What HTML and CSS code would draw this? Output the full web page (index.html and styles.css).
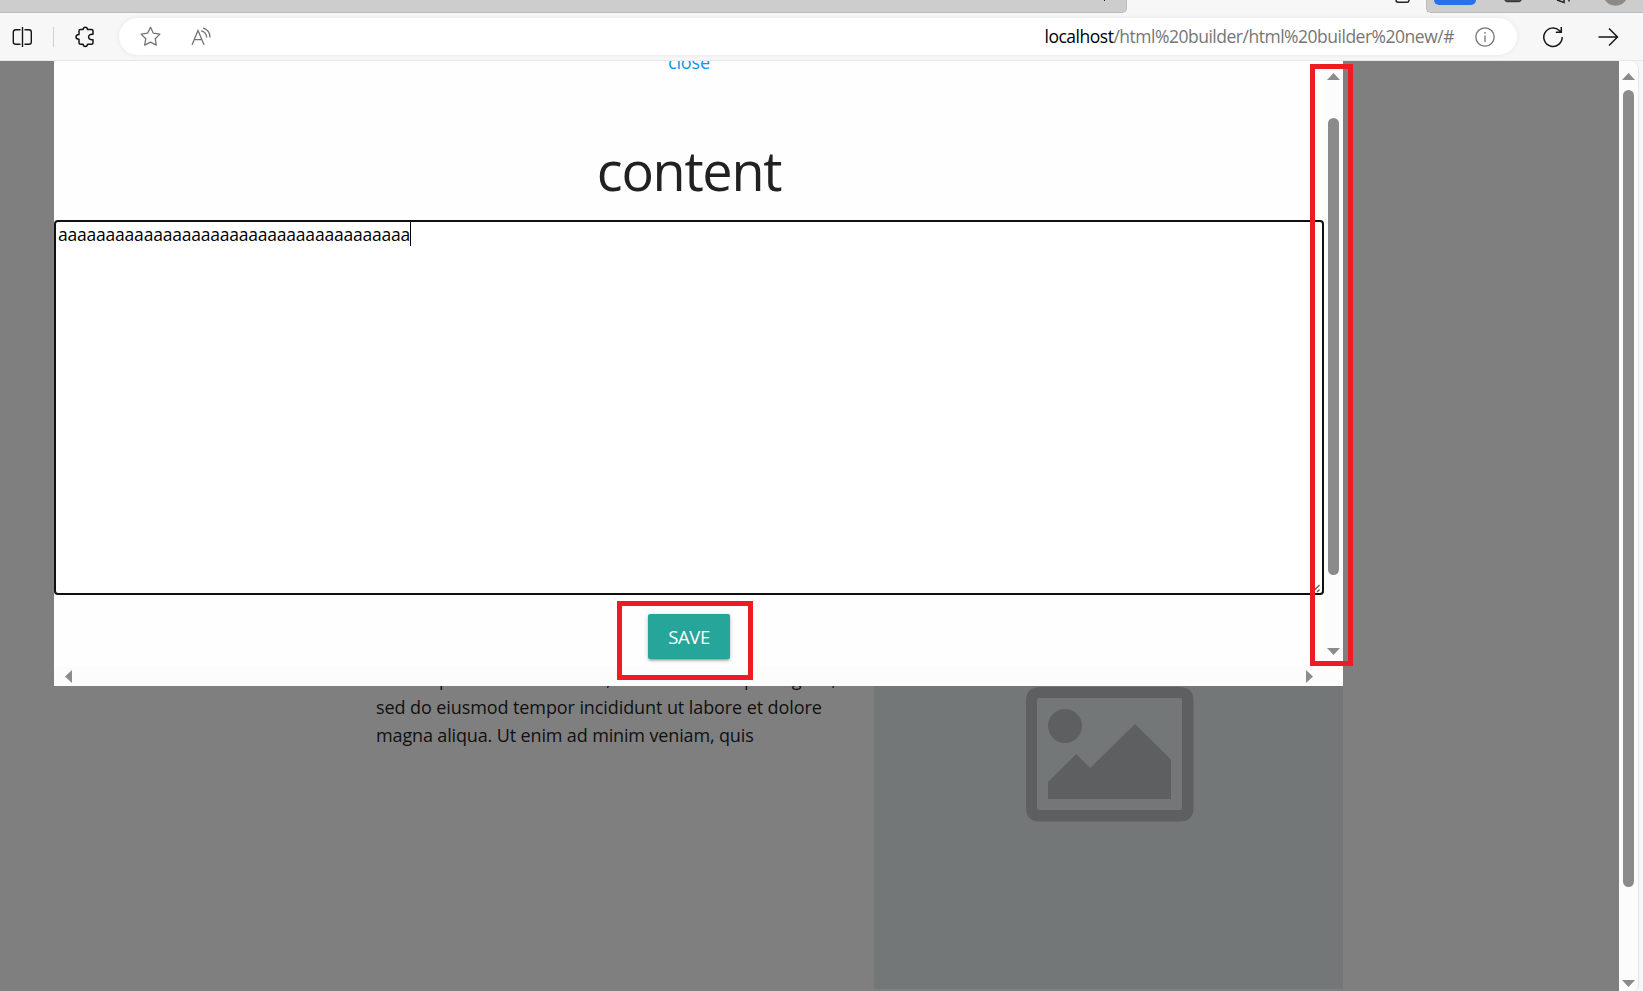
FILE: index.html
```html
<!DOCTYPE html>
<html lang="en">
<head>
<meta charset="utf-8">
<title>html builder</title>
<link rel="stylesheet" href="styles.css">
</head>
<body>
<header class="chrome">
  <div class="tabstrip">
    <div class="tabs-left"><svg class="tab-mark" width="6" height="3"><path d="M2 0h2v1h-1V0z" fill="#111"/></svg></div>
    <svg class="tab-icon" width="18" height="13" viewBox="0 0 18 13"><path d="M2 0c0 1.500.7 2.200 2 2.200h9c1.300 0 2-.7 2-2.200" fill="none" stroke="#222" stroke-width="1.400"/></svg>
    <div class="tabs-right">
      <span class="badge"></span>
      <svg width="167" height="13" viewBox="0 0 167 13">
        <path d="M29 0c0 1 1 1.700 2 1.700h12c1 0 2-.7 2-1.700z" fill="#777" stroke="#222"/>
        <path d="M81 0l7 2.500v-2.500M86 2h1M93 0v1.500" fill="none" stroke="#222" stroke-width="1.500"/>
        <path d="M129 0a12 11 0 0 0 21 0z" fill="#8e8985"/>
      </svg>
    </div>
  </div>
  <div class="toolbar">
    <svg class="split" width="20" height="20" viewBox="0 0 20 20" fill="none" stroke="#161616" stroke-width="1.400"><path d="M10.500 0v20M8.500 2.700H4Q1.300 2.700 1.300 5v10Q1.300 17.300 4 17.300h4.500M12.500 2.700H17Q19.300 2.700 19.300 5v10Q19.300 17.300 17 17.300h-4.500"/></svg>
    <span class="divider"></span>
    <svg class="puzzle" width="20" height="22" viewBox="0 0 20 22" fill="none" stroke="#161616" stroke-width="1.500" stroke-linejoin="round"><path d="M8 3.600Q8.300 1.200 10.300 1.200T12.600 3.600H16.500Q18 3.600 18 5.100V8.300Q13.600 7.900 13.600 11T18 13.700V16.700Q18 18.200 16.500 18.200H12.600Q12.300 20.600 10.300 20.600T8 18.200H5.500Q4 18.200 4 16.700V13.300Q1 13.200 1 11T4 8.600V5.100Q4 3.600 5.500 3.600Z"/></svg>
    <div class="address">
      <svg class="star" width="21" height="21" viewBox="0 0 21 21" fill="none" stroke="#747474" stroke-width="1.300" stroke-linejoin="round"><path d="M10.500 1.300l2.900 5.900 6.500.9-4.700 4.600 1.100 6.500-5.800-3-5.800 3 1.100-6.500L1.100 8.100l6.500-.9z"/></svg>
      <svg class="read" width="20" height="20" viewBox="0 0 20 20" fill="none" stroke="#747474" stroke-width="1.300" stroke-linecap="round"><path d="M1.200 17.500L7 3.500l5.900 14M3.200 12.600h7.700M12.500 1.200Q18.600 3.200 19 10M10.600 3.900Q15 5.300 15.700 10"/></svg>
      <span class="url"><b>localhost</b>/html%20builder/html%20builder%20new/#</span>
      <svg class="info" width="20" height="20" viewBox="0 0 20 20" fill="none" stroke="#747474" stroke-width="1.300"><circle cx="10" cy="10" r="9.200"/><path d="M10 8.500v6.500M10 5v1.700"/></svg>
    </div>
    <svg class="reload" width="22" height="22" viewBox="0 0 22 22" fill="none" stroke="#161616" stroke-width="1.500"><path d="M20.200 11A9.200 9.200 0 1 1 17.300 4.500L19.200 6.200M19.300 1v5.200h-5.500"/></svg>
    <svg class="forward" width="21" height="20" viewBox="0 0 21 20" fill="none" stroke="#161616" stroke-width="1.500"><path d="M.5 10h19M11 1.500l8.500 8.500-8.500 8.500"/></svg>
  </div>
</header>

<div class="window">
  <main class="page">
    <div class="columns">
      <p class="lorem"><span class="l1">Lorem ipsum dolor sit amet, consectetur adipiscing elit,</span><span class="l2">sed do eiusmod tempor incididunt ut labore et dolore</span><span class="l3">magna aliqua. Ut enim ad minim veniam, quis</span></p>
      <div class="placeholder">
        <svg width="168" height="135" viewBox="0 0 168 135" fill="#5e5f61"><path fill-rule="evenodd" d="M14 0H153.500Q167.500 0 167.500 14V120.500Q167.500 134.500 153.500 134.500H14Q0 134.500 0 120.500V14Q0 0 14 0ZM13.500 11Q11 11 11 13.500V120.500Q11 123 13.500 123H153.500Q156 123 156 120.500V13.500Q156 11 153.500 11Z"/><circle cx="39" cy="39" r="17"/><path d="M22 95l28.300-28L64.200 81 109 37l36 35.500V112H22z"/></svg>
      </div>
    </div>

    <section class="modal">
      <div class="modal-body">
        <div class="modal-content">
          <a class="close">close</a>
          <h1 class="title">content</h1>
          <div class="textarea"><span class="typed">aaaaaaaaaaaaaaaaaaaaaaaaaaaaaaaaaaaaa</span><i class="caret"></i>
            <svg class="grip" width="9" height="9" viewBox="0 0 9 9" stroke="#555" stroke-width="1.300"><path d="M1 7.500L7.500 1M5 8l2.500-2.500"/></svg>
          </div>
          <div class="actions"><span class="save">SAVE</span></div>
        </div>
        <div class="vbar inner">
          <svg width="13" height="7"><path d="M0 7L6.500 0 13 7z" fill="#8b8b8b"/></svg>
          <span class="thumb"></span>
          <svg class="down" width="13" height="7"><path d="M0 0h13L6.500 7z" fill="#8b8b8b"/></svg>
        </div>
      </div>
      <div class="hbar">
        <svg width="7" height="13"><path d="M7 0v13L0 6.500z" fill="#8b8b8b"/></svg>
        <svg width="7" height="13"><path d="M0 0v13l7-6.500z" fill="#8b8b8b"/></svg>
      </div>
    </section>
    <div class="mark mark-save"></div>
    <div class="mark mark-scroll"></div>
  </main>
  <div class="vbar outer">
    <svg width="13" height="7"><path d="M0 7L6.500 0 13 7z" fill="#8b8b8b"/></svg>
    <span class="thumb"></span>
    <svg class="down" width="13" height="7"><path d="M0 0h13L6.500 7z" fill="#8b8b8b"/></svg>
  </div>
</div>
</body>
</html>
```
FILE: styles.css
```css
* { box-sizing: border-box; }
body {
  margin: 0; width: 1643px; height: 991px; overflow: hidden;
  display: flex; flex-direction: column;
  background: #f7f7f7; font-family: "Open Sans", "Noto Sans", sans-serif;
}
svg { display: block; flex: none; overflow: visible; }

/* browser chrome */
.chrome { flex: none; height: 61px; border-bottom: 1px solid #e8e8e8; }
.tabstrip { height: 13px; display: flex; }
.tabs-left { width: 1127px; background: #cdcdcd; border-bottom: 1px solid #bcbcbc; border-right: 1px solid #bcbcbc; border-radius: 0 0 5px 0; }
.tab-mark { margin-left: 1101px; }
.tab-icon { margin-left: 267px; }
.tabs-right { margin-left: auto; width: 217px; background: #cdcdcd; border-bottom: 1px solid #bcbcbc; border-left: 1px solid #bcbcbc; border-radius: 0 0 0 5px; display: flex; }
.badge { width: 42px; height: 5px; margin-left: 7px; background: #2a6fee; border-radius: 0 0 5px 5px; }
.toolbar { height: 47px; display: flex; align-items: center; }
.split { margin-left: 12px; }
.divider { width: 1px; height: 20px; background: #cfcfcf; margin-left: 21px; }
.puzzle { margin-left: 21px; }
.address {
  width: 1398px; height: 37px; margin-left: 24px; background: #fff; border-radius: 19px;
  box-shadow: 0 0 5px rgba(0,0,0,.07); display: flex; align-items: center;
}
.star { margin-left: 21px; }
.read { margin-left: 30px; }
.url { margin-left: auto; padding-bottom: 2px; font-size: 17.500px; letter-spacing: -.49px; color: #767676; white-space: nowrap; }
.url b { font-weight: 400; color: #000; }
.info { margin: 0 22px 0 21px; }
.reload { margin-left: 25px; }
.forward { margin-left: 34px; }

/* page */
.window { flex: 1; display: flex; min-height: 0; }
.page { position: relative; width: 1619px; background: #7f7f7f; overflow: hidden; }
.columns { display: flex; padding-top: 625px; }
.lorem { width: 498px; height: 200px; margin: -21px 0 0 376px; font-size: 18px; line-height: 28px; color: #101010; white-space: nowrap; }
.lorem span { display: block; }
.l1 { letter-spacing: -.07px; }
.l2 { letter-spacing: -.09px; }
.l3 { letter-spacing: -.14px; }
.placeholder { width: 469px; height: 303px; background: #737778; padding: 1px 0 0 152px; }

/* modal */
.modal { position: absolute; left: 54px; top: 0; width: 1289px; height: 625px; background: #fefefe; display: flex; flex-direction: column; }
.modal-body { height: 606px; display: flex; overflow: hidden; }
.modal-content { width: 1270px; display: flex; flex-direction: column; align-items: center; }
.close { height: 28px; margin-top: -13px; line-height: 28px; font-size: 18px; letter-spacing: -.1px; color: #039be5; }
.title { height: 60px; margin: 64px 0 20px; line-height: 60px; font-size: 54px; font-weight: 400; letter-spacing: -1.300px; color: #212121; }
.textarea { position: relative; width: 1270px; height: 375px; border: 2px solid #101010; border-radius: 4px; background: #fff; display: flex; padding-left: 2px; font-size: 17.500px; line-height: 24px; color: #000; }
.typed { letter-spacing: -.21px; }
.caret { width: 1px; height: 24px; background: #000; }
.grip { position: absolute; right: 1px; bottom: 0; }
.actions { padding-top: 19px; }
.save {
  display: block; width: 82px; height: 45px; border-radius: 2px; background: #26a69a; color: #fff;
  font-size: 18.500px; line-height: 46px; text-align: center; letter-spacing: -.4px;
  box-shadow: 0 2px 2px 0 rgba(0,0,0,.14), 0 3px 1px -2px rgba(0,0,0,.12), 0 1px 5px 0 rgba(0,0,0,.2);
}
.vbar { width: 19px; background: #fcfcfc; display: flex; flex-direction: column; align-items: center; padding-top: 12px; flex: none; }
.thumb { width: 11px; border-radius: 6px; background: #8b8b8b; }
.down { margin-top: auto; }
.inner { padding-bottom: 12px; }
.inner .thumb { height: 457px; margin-top: 38px; }
.outer { width: 20px; border-right: 1px solid #e5e5e5; border-radius: 0 8px 6px 0; padding-bottom: 4px; }
.outer .thumb { height: 797px; margin-top: 10px; }
.hbar { height: 19px; background: #fcfcfc; display: flex; justify-content: space-between; align-items: center; padding: 0 30px 0 11px; }

/* red highlight boxes */
.mark { position: absolute; border: 5px solid #ed1c24; }
.mark-save { left: 617px; top: 540px; width: 136px; height: 79px; }
.mark-scroll { left: 1310px; top: 3px; width: 43px; height: 602px; }
```
